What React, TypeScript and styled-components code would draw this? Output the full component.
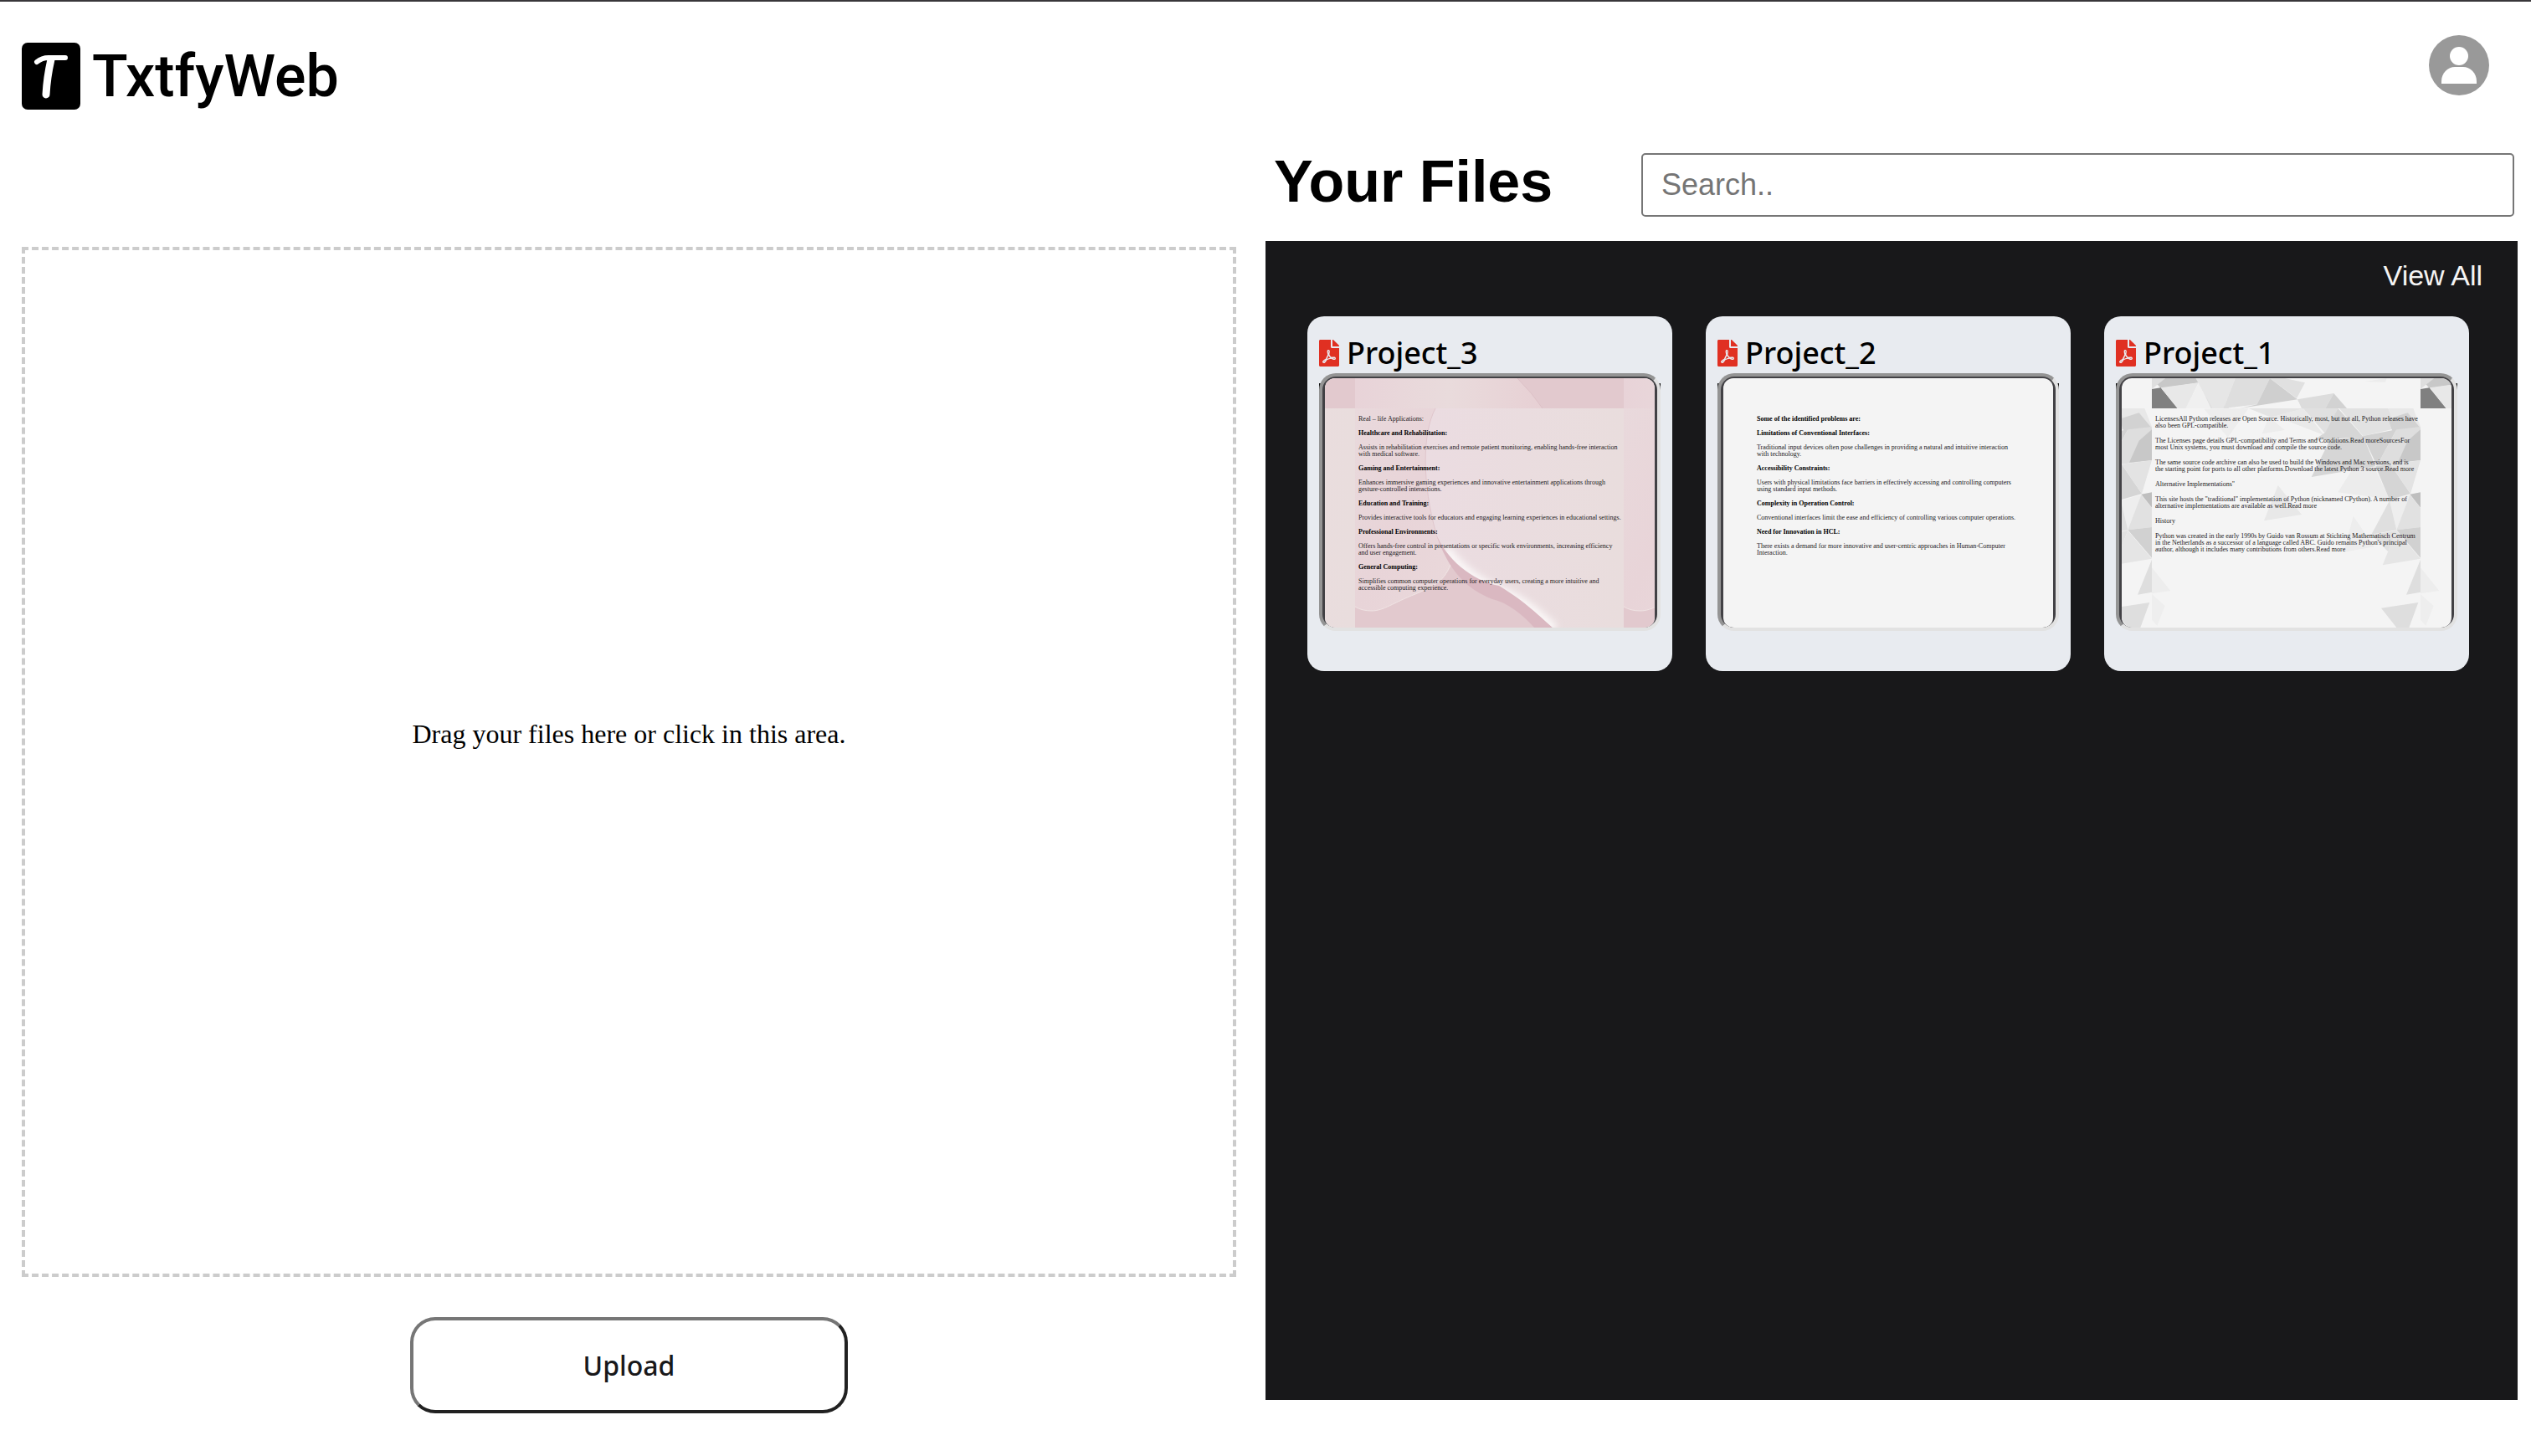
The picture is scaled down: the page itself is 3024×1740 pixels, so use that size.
import React from "react";
import styled, { createGlobalStyle, css } from "styled-components";
import { FaFilePdf } from "react-icons/fa";

const SANS = '"Liberation Sans", Arial, sans-serif';
const HUMANIST = '"Noto Sans", "Open Sans", sans-serif';
const SERIF = '"Liberation Serif", "Times New Roman", serif';

const GlobalStyle = createGlobalStyle`
  *, *::before, *::after { box-sizing: border-box; }
  body { margin: 0; background: #fff; color: #000; font-family: ${SERIF}; }
  h1, h2, h3, p { margin: 0; }
`;

const Page = styled.div`
  display: flex;
  flex-direction: column;
  min-height: 100vh;
  border-top: 2px solid #39373a;
`;

const Header = styled.header`
  display: flex;
  justify-content: space-between;
  align-items: flex-start;
  padding: 40px 50px 52px 26px;
`;

const Brand = styled.h1`
  display: flex;
  align-items: center;
  gap: 14px;
  padding-top: 9px;
  font: 500 70px/80px Roboto, ${SANS};
`;

const LogoMark = styled.svg`
  flex: none;
  width: 70px;
  height: 80px;
`;

const AvatarButton = styled.button`
  width: 72px;
  height: 72px;
  padding: 0;
  border: 0;
  border-radius: 50%;
  background: none;
  cursor: pointer;

  svg {
    display: block;
    width: 100%;
    height: 100%;
  }
`;

const Main = styled.main`
  flex: 1;
  display: grid;
  grid-template-columns: minmax(0, 1fr) minmax(0, 1fr);
`;

const UploadColumn = styled.section`
  display: flex;
  flex-direction: column;
  align-items: center;
  gap: 48px;
  padding: 112px 35px 51px 26px;
`;

const DropZone = styled.label`
  flex: 1;
  align-self: stretch;
  display: flex;
  align-items: center;
  justify-content: center;
  padding-bottom: 68px;
  border: 4px dashed #ccc;
  font: 32px/36px ${SERIF};
  cursor: pointer;
`;

const HiddenFileInput = styled.input`
  width: 0;
  height: 0;
  opacity: 0;
`;

const UploadButton = styled.button`
  width: 36%;
  height: 115px;
  border: 4px solid;
  border-color: #767676 #212121 #212121 #767676;
  border-radius: 30px;
  background: #fff;
  color: #18181a;
  font: 500 32px/44px ${HUMANIST};
  cursor: pointer;
`;

const FilesColumn = styled.section`
  display: flex;
  flex-direction: column;
  gap: 29px;
  padding: 0 16px 67px 0;
`;

const FilesHead = styled.div`
  display: flex;
  align-items: flex-start;
  padding: 0 4px 0 10px;
`;

const FilesTitle = styled.h2`
  width: 439px;
  font: 700 70px/68px ${SANS};
`;

const SearchInput = styled.input`
  flex: 1;
  min-width: 0;
  height: 76px;
  padding: 0 22px;
  border: 2px solid #767676;
  border-radius: 5px;
  background: #fff;
  font: 36px/40px ${SANS};

  &::placeholder { color: #757575; }
`;

const FilesPanel = styled.div`
  flex: 1;
  display: flex;
  flex-direction: column;
  gap: 29px;
  padding: 21px 0 50px;
  background: #18181a;
`;

const ViewAll = styled.a`
  align-self: flex-end;
  margin-right: 42px;
  color: #f4f4f4;
  font: 34px/40px ${SANS};
  text-decoration: none;
`;

const CardGrid = styled.div`
  display: grid;
  grid-template-columns: repeat(3, minmax(0, 1fr));
  gap: 40px;
  padding: 0 58px 0 50px;
`;

const Card = styled.article`
  padding: 20px 14px 48px;
  border-radius: 20px;
  background: #e8ebf0;
`;

const CardHead = styled.div`
  display: flex;
  align-items: center;
  gap: 9px;
`;

const PdfIcon = styled(FaFilePdf)`
  flex: none;
  width: 24px;
  height: 32px;
  color: #e03022;
`;

const CardTitle = styled.h3`
  font: 500 36px/48px ${HUMANIST};
`;

/* Dark sheet that peeks out behind the rounded top corners of the frame. */
const FrameBacking = styled.div`
  background: linear-gradient(#111, #111) 0 12px / 100% 8px no-repeat;
`;

const Frame = styled.div`
  height: 308px;
  padding: 2px 3px 0;
  border: 4px solid;
  border-color: #949494 #e2e2e2 #e2e2e2 #949494;
  border-radius: 20px;
  background: #424145;
  overflow: hidden;
`;

const Sheet = styled.div`
  position: relative;
  height: 100%;
  background: #f4f4f4;
  border-radius: 12px;
  overflow: hidden;
`;

const SheetArt = styled.svg`
  position: absolute;
  inset: 0;
  width: 100%;
  height: 100%;
`;

const SheetText = styled.div<{ $gap: number }>`
  position: relative;
  display: grid;
  gap: ${(p) => p.$gap}px;
  padding: 45px 0 0 40px;
  color: #1c1a1c;
  font: 8px/8px ${SERIF};
  white-space: pre;
`;

const Paragraph = styled.p<{ $bold?: boolean }>`
  ${(p) =>
    p.$bold &&
    css`
      color: #000;
      font-weight: 700;
    `}
`;

type Block = { text: string; bold?: boolean };
type Art = "blush" | "facets" | "plain";
type FileItem = { name: string; art: Art; gap: number; blocks: Block[] };

const files: FileItem[] = [
  {
    name: "Project_3",
    art: "blush",
    gap: 9,
    blocks: [
      { text: "Real – life Applications:" },
      { text: "Healthcare and Rehabilitation:", bold: true },
      { text: "Assists in rehabilitation exercises and remote patient monitoring, enabling hands-free interaction\nwith medical software." },
      { text: "Gaming and Entertainment:", bold: true },
      { text: "Enhances immersive gaming experiences and innovative entertainment applications through\ngesture-controlled interactions." },
      { text: "Education and Training:", bold: true },
      { text: "Provides interactive tools for educators and engaging learning experiences in educational settings." },
      { text: "Professional Environments:", bold: true },
      { text: "Offers hands-free control in presentations or specific work environments, increasing efficiency\nand user engagement." },
      { text: "General Computing:", bold: true },
      { text: "Simplifies common computer operations for everyday users, creating a more intuitive and\naccessible computing experience." },
    ],
  },
  {
    name: "Project_2",
    art: "plain",
    gap: 9,
    blocks: [
      { text: "Some of the identified problems are:", bold: true },
      { text: "Limitations of Conventional Interfaces:", bold: true },
      { text: "Traditional input devices often pose challenges in providing a natural and intuitive interaction\nwith technology." },
      { text: "Accessibility Constraints:", bold: true },
      { text: "Users with physical limitations face barriers in effectively accessing and controlling computers\nusing standard input methods." },
      { text: "Complexity in Operation Control:", bold: true },
      { text: "Conventional interfaces limit the ease and efficiency of controlling various computer operations." },
      { text: "Need for Innovation in HCL:", bold: true },
      { text: "There exists a demand for more innovative and user-centric approaches in Human-Computer\nInteraction." },
    ],
  },
  {
    name: "Project_1",
    art: "facets",
    gap: 10,
    blocks: [
      { text: "LicensesAll Python releases are Open Source. Historically, most, but not all, Python releases have\nalso been GPL-compatible." },
      { text: "The Licenses page details GPL-compatibility and Terms and Conditions.Read moreSourcesFor\nmost Unix systems, you must download and compile the source code." },
      { text: "The same source code archive can also be used to build the Windows and Mac versions, and is\nthe starting point for ports to all other platforms.Download the latest Python 3 source.Read more" },
      { text: "Alternative Implementations\"" },
      { text: "This site hosts the \"traditional\" implementation of Python (nicknamed CPython). A number of\nalternative implementations are available as well.Read more" },
      { text: "History" },
      { text: "Python was created in the early 1990s by Guido van Rossum at Stichting Mathematisch Centrum\nin the Netherlands as a successor of a language called ABC. Guido remains Python's principal\nauthor, although it includes many contributions from others.Read more" },
    ],
  },
];

/* Tiled stationery: the pattern starts 36px in and repeats to every side. */
function BlushArt() {
  return (
    <SheetArt aria-hidden="true">
      <defs>
        <linearGradient id="blush-left" x1="0" x2="1" y1="0" y2="1">
          <stop offset="0" stopColor="#e9d9dc" />
          <stop offset="0.5" stopColor="#e8d4d8" />
          <stop offset="1" stopColor="#ead9db" />
        </linearGradient>
        <linearGradient id="blush-right" x1="0" x2="1">
          <stop offset="0" stopColor="#ebdce1" />
          <stop offset="1" stopColor="#e9dddd" />
        </linearGradient>
        <linearGradient id="blush-foot" x1="0" x2="1">
          <stop offset="0" stopColor="#e8d3d8" />
          <stop offset="0.5" stopColor="#e9dbdc" />
          <stop offset="1" stopColor="#e7d0d4" />
        </linearGradient>
        <filter id="blush-soft" x="-20%" y="-20%" width="140%" height="140%">
          <feGaussianBlur stdDeviation="4" />
        </filter>
        <clipPath id="blush-petal">
          <path d="M96 0 C80 30 80 90 97 150 C108 180 140 206 172 218 C205 232 222 250 238 264 L321 264 L321 0Z" />
        </clipPath>
        <pattern id="blush" x="36" y="36" width="321" height="454" patternUnits="userSpaceOnUse">
          <rect width="321" height="454" fill="#e2c9ce" />
          <path d="M0 0 H120 V176 C108 206 100 210 72 222 C46 232 34 242 20 242 Q8 242 0 237Z" fill="url(#blush-left)" />
          <path d="M0 237 Q8 242 20 242 C34 242 46 232 72 222 C100 210 108 206 118 176" fill="none" stroke="#f0e4e4" strokeWidth="1" />
          <path d="M96 0 C80 30 80 90 97 150 C108 180 140 206 172 218 C205 232 222 250 238 264 L321 264 L321 0Z" fill="url(#blush-right)" />
          <g clipPath="url(#blush-petal)">
            <path d="M108 168 C122 190 150 210 172 218 C205 232 222 250 238 264" fill="none" stroke="#fbf8f8" strokeWidth="12" filter="url(#blush-soft)" />
          </g>
          <path d="M96 0 C80 30 80 90 97 150" fill="none" stroke="#e0c6cc" strokeWidth="1" />
          <path d="M96 148 C108 180 140 206 172 212 C205 232 222 250 238 264 L216 264 C200 246 182 232 164 228 C134 216 112 196 96 148Z" fill="#dab8c1" />
          <path d="M0 418 H194 Q212 436 224 454 H0Z" fill="url(#blush-foot)" />
          <path d="M194 418 Q212 436 224 454" fill="none" stroke="#dcc0c6" strokeWidth="1" />
        </pattern>
      </defs>
      <rect width="100%" height="100%" fill="url(#blush)" />
    </SheetArt>
  );
}

const facets: [string, string][] = [
  ["400,356 560,354 485,458", "#ededed"],
  ["560,354 760,354 640,386", "#e4e4e4"],
  ["632,385 690,432 608,445", "#ededed"],
  ["640,386 755,354 830,450 700,400", "#e9e9e9"],
  ["755,354 880,354 835,445", "#e0e0e0"],
  ["880,354 970,455 790,470 835,440", "#d6d6d6"],
  ["885,354 1060,354 1090,425 970,453", "#e2e2e2"],
  ["1060,354 1150,354 1176,420 1090,430", "#e8e8e8"],
  ["1060,392 1130,370 1176,425 1075,435", "#d2d2d2"],
  ["970,453 1090,430 1020,560", "#d2d2d2"],
  ["1090,430 1176,420 1176,540 1020,560", "#dedede"],
  ["1130,470 1176,430 1176,540 1095,548", "#c8c8c8"],
  ["970,453 1015,562 785,600 850,470", "#d6d6d6"],
  ["930,575 1010,565 1065,680 880,655", "#ececec"],
  ["1015,562 1068,555 1140,660 1065,682", "#d5d5d5"],
  ["1068,555 1176,540 1140,660", "#e3e3e3"],
  ["1138,662 1176,655 1176,710", "#bfbfbf"],
  ["1065,685 1138,664 1090,790", "#eeeeee"],
  ["1138,664 1176,710 1176,780 1090,790", "#e1e1e1"],
  ["1065,685 1090,790 1000,806", "#dfdfdf"],
  ["1090,790 1176,780 1176,890", "#d1d1d1"],
  ["1000,808 1090,792 1060,868", "#e1e1e1"],
  ["1090,792 1176,893 1040,916", "#e5e5e5"],
  ["935,740 1010,850 900,870", "#ededed"],
  ["665,630 750,735 615,757", "#e8e8e8"],
  ["1176,896 1176,1013 1125,1022", "#dedede"],
  ["1035,1070 1168,1050 1135,1140 1090,1140", "#dedede"],
  ["213,925 280,1008 213,1018", "#ededed"],
  ["213,1020 260,1062 232,1133 213,1112", "#eeeeee"],
];

const footFacets: [string, string][] = [
  ["213,246 380,246 382,262 245,282", "#c8c8c8"],
  ["213,246 262,246 213,285", "#dedede"],
  ["213,285 245,280 305,354 213,354", "#808080"],
  ["245,280 380,262 335,354 305,354", "#e8e8e8"],
  ["382,262 425,354 335,354", "#f0f0f0"],
  ["382,262 490,354 425,354", "#dedede"],
  ["370,246 512,246 470,354 430,354", "#e6e6e6"],
  ["512,246 636,246 590,340 470,354", "#dedede"],
  ["636,246 735,322 528,354 590,340", "#cfcfcf"],
  ["636,246 690,246 762,262 732,318", "#e0e0e0"],
  ["735,322 865,300 835,354 750,354", "#dcdcdc"],
  ["865,300 912,354 835,354", "#d2d2d2"],
  ["975,258 1055,246 1050,260", "#ececec"],
];

function FacetsArt() {
  return (
    <SheetArt aria-hidden="true">
      <defs>
        <pattern id="facets" x="36" y="36" width="321" height="454" patternUnits="userSpaceOnUse">
          <g transform="scale(0.33333) translate(-213 -354)">
            {facets.map(([points, fill]) => (
              <polygon key={points} points={points} fill={fill} />
            ))}
          </g>
          <g transform="translate(0 418) scale(0.33333) translate(-213 -246)">
            {footFacets.map(([points, fill]) => (
              <polygon key={points} points={points} fill={fill} />
            ))}
          </g>
        </pattern>
      </defs>
      <rect width="100%" height="100%" fill="url(#facets)" />
    </SheetArt>
  );
}

function FileCard({ file }: { file: FileItem }) {
  return (
    <Card>
      <CardHead>
        <PdfIcon aria-hidden="true" />
        <CardTitle>{file.name}</CardTitle>
      </CardHead>
      <FrameBacking>
        <Frame>
          <Sheet>
            {file.art === "blush" && <BlushArt />}
            {file.art === "facets" && <FacetsArt />}
            <SheetText $gap={file.gap}>
              {file.blocks.map((b) => (
                <Paragraph key={b.text} $bold={b.bold}>
                  {b.text}
                </Paragraph>
              ))}
            </SheetText>
          </Sheet>
        </Frame>
      </FrameBacking>
    </Card>
  );
}

export default function App() {
  return (
    <Page>
      <GlobalStyle />
      <Header>
        <Brand>
          <LogoMark viewBox="0 0 70 80" aria-hidden="true">
            <rect width="70" height="80" rx="7" />
            <g fill="none" stroke="#fff">
              <path d="M18 23 Q24 18 32 18 H52" strokeWidth="6" strokeLinecap="round" />
              <path d="M35 20 Q30 42 29 62" strokeWidth="9" strokeLinecap="round" />
            </g>
          </LogoMark>
          TxtfyWeb
        </Brand>
        <AvatarButton type="button" aria-label="Account">
          <svg viewBox="0 0 72 72">
            <circle cx="36" cy="36" r="36" fill="#999" />
            <circle cx="36" cy="25" r="11" fill="#fff" />
            <path d="M15 58 V55 C15 45 23 38 31 38 H41 C49 38 57 45 57 55 V58Z" fill="#fff" />
          </svg>
        </AvatarButton>
      </Header>
      <Main>
        <UploadColumn>
          <DropZone>
            Drag your files here or click in this area.
            <HiddenFileInput type="file" multiple />
          </DropZone>
          <UploadButton type="button">Upload</UploadButton>
        </UploadColumn>
        <FilesColumn>
          <FilesHead>
            <FilesTitle>Your Files</FilesTitle>
            <SearchInput type="search" placeholder="Search.." aria-label="Search files" />
          </FilesHead>
          <FilesPanel>
            <ViewAll href="#all">View All</ViewAll>
            <CardGrid>
              {files.map((f) => (
                <FileCard key={f.name} file={f} />
              ))}
            </CardGrid>
          </FilesPanel>
        </FilesColumn>
      </Main>
    </Page>
  );
}
